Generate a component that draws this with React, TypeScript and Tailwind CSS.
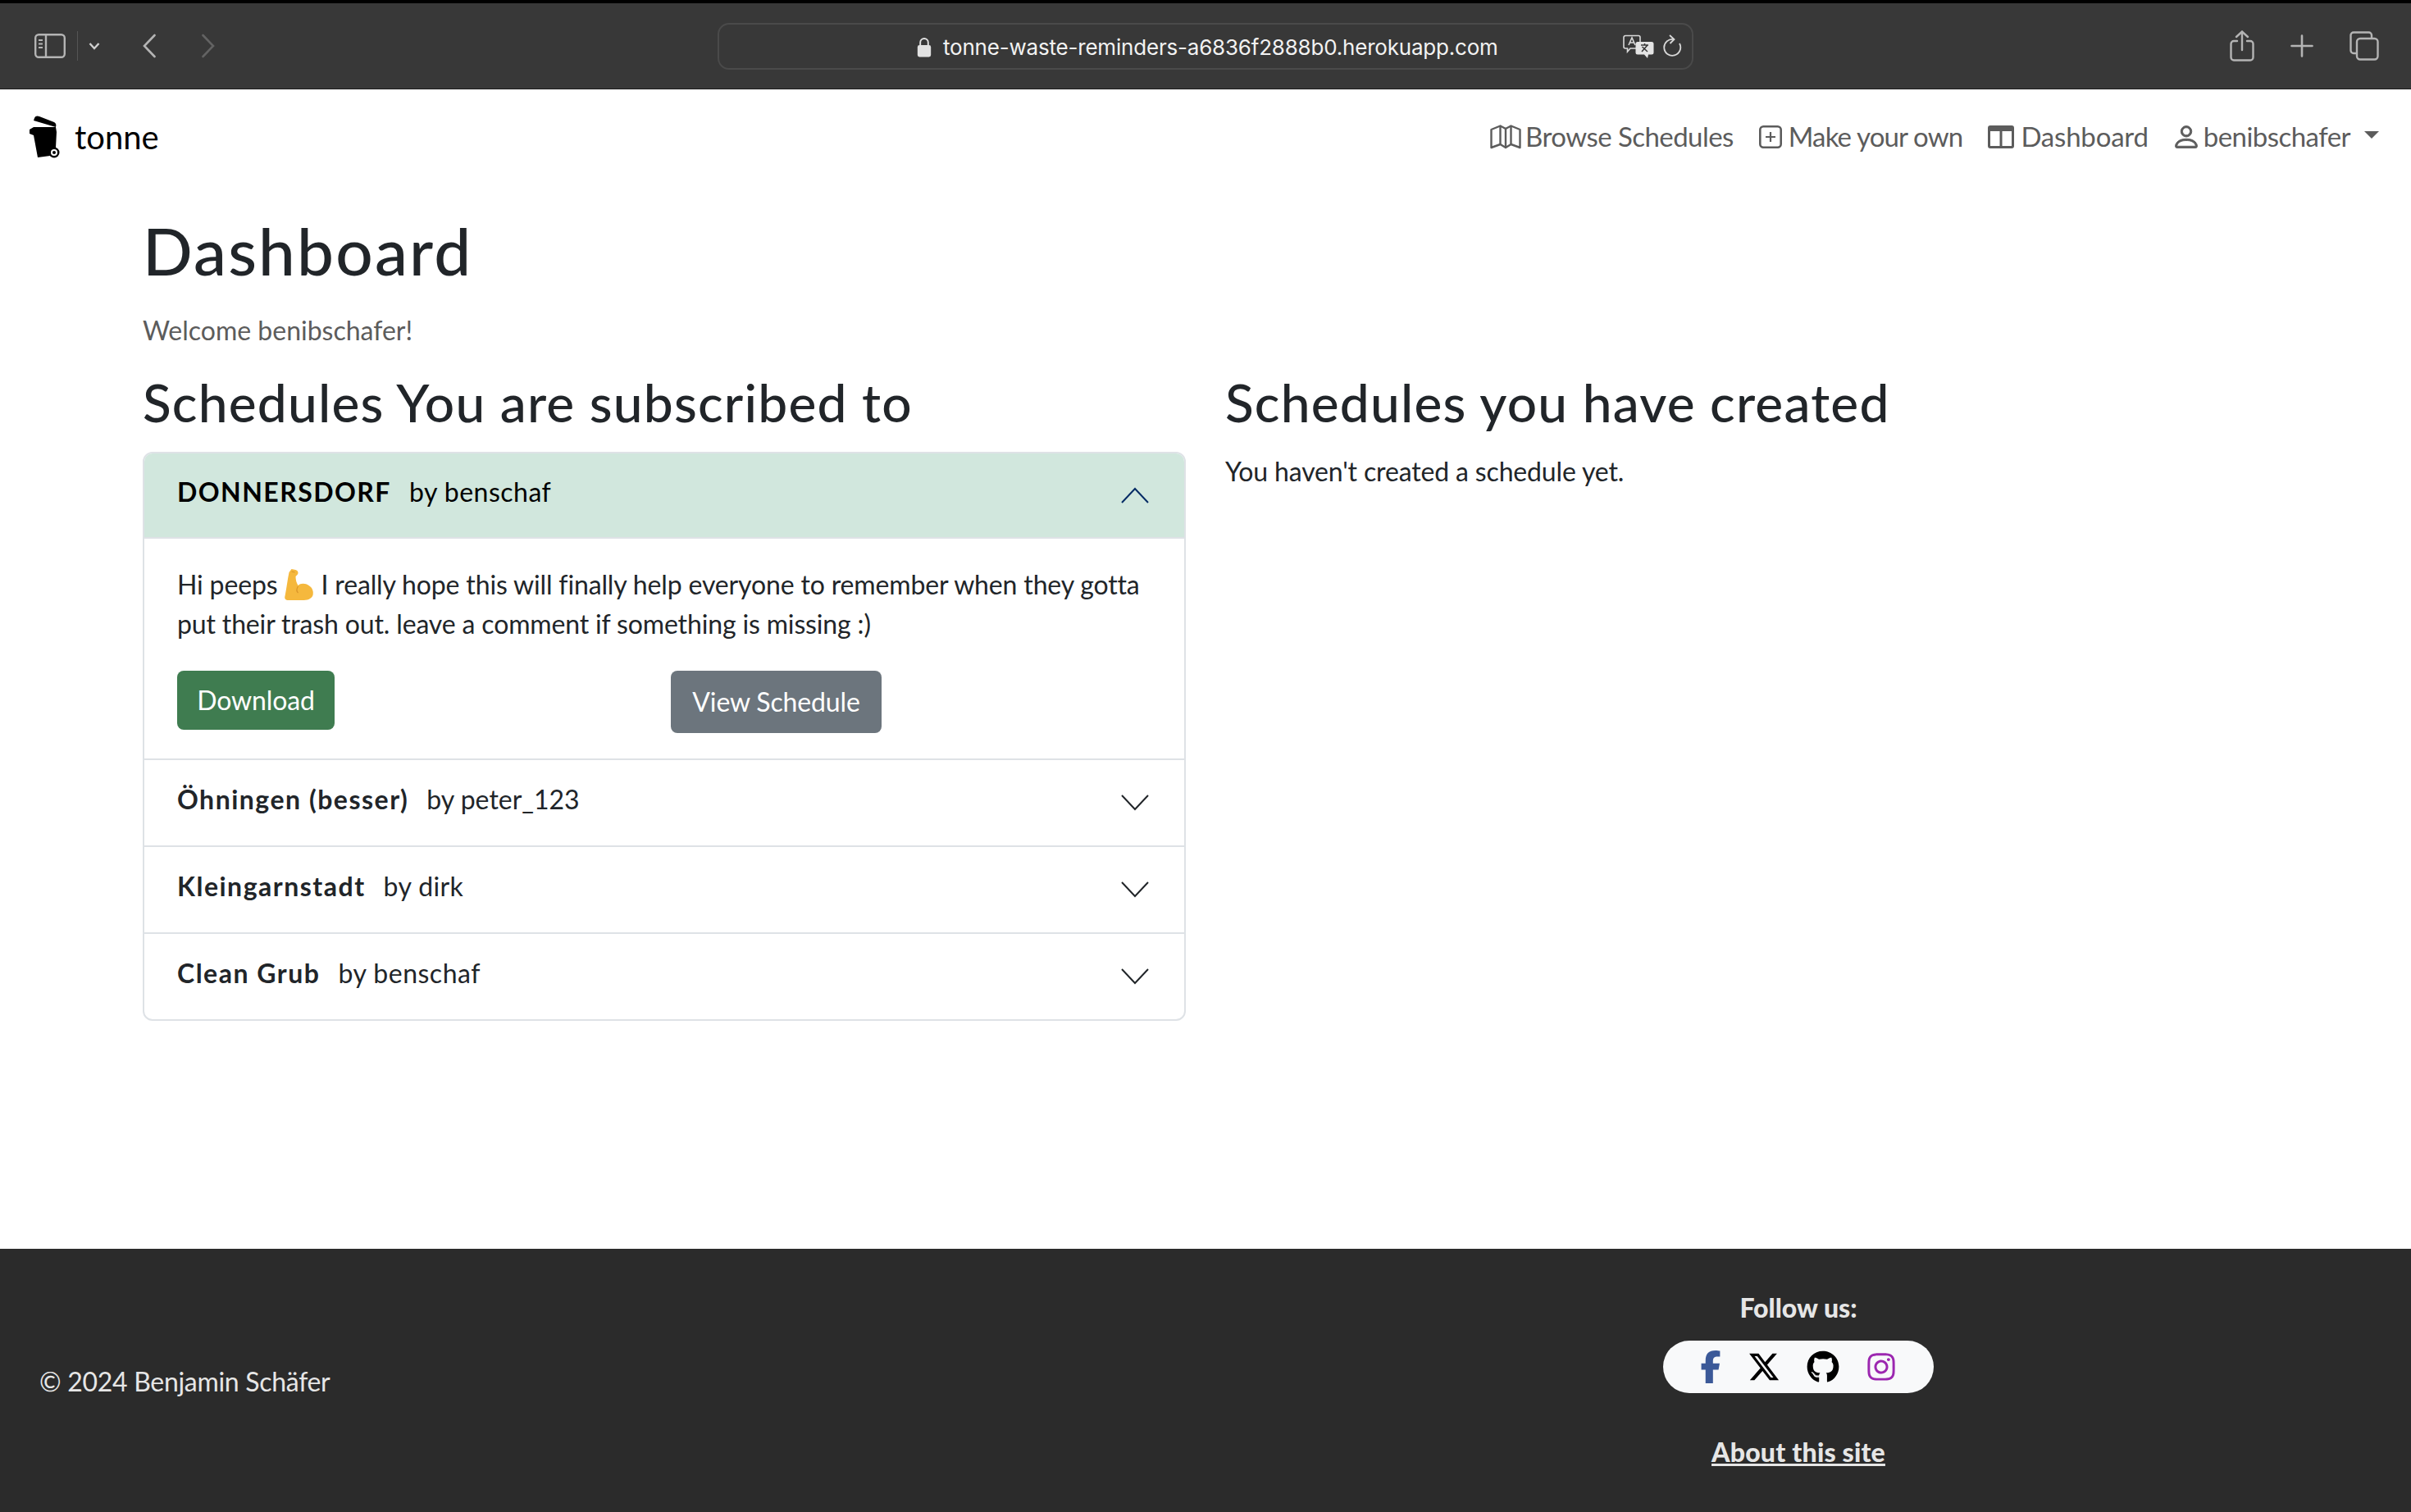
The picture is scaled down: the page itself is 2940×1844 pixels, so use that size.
import React from 'react';
import { BsPerson } from 'react-icons/bs';
import { FaFacebookF, FaXTwitter, FaGithub, FaInstagram } from 'react-icons/fa6';

const headingFont = "font-['Lato',sans-serif]";

function TrashLogo() {
  return (
    <svg viewBox="0 0 38 52" className="h-[52px] w-[38px]">
      <path d="M7 3 C8 0 11 0 13 1 L31 8 C33 9 34 11 33 14 L6 6 Z" fill="#000" />
      <path d="M1 17 L6 14 L33 14 L34 20 L33 39 C27 40 25 44 26 49 L11 51 L6 24 L1 22 Z" fill="#000" />
      <circle cx="31" cy="45" r="6.5" fill="#000" />
      <circle cx="31" cy="45" r="4" fill="#fff" />
      <circle cx="31" cy="45" r="2" fill="#000" />
    </svg>
  );
}

function MapIcon() {
  return (
    <svg viewBox="0 0 38 30" className="h-[30px] w-[38px]" fill="none" stroke="#5c5c5c" strokeWidth="2.4" strokeLinejoin="round">
      <path d="M1.5 6 L12.5 1.5 L19 5 L25.5 1.5 L36.5 6 V28 L25.5 24 L19 28 L12.5 24 L1.5 28 Z" />
      <path d="M12.5 1.5 V24 M19 5 V28 M25.5 1.5 V24" />
    </svg>
  );
}

function PlusSquareIcon() {
  return (
    <svg viewBox="0 0 28 28" className="h-[28px] w-[28px]" fill="none" stroke="#5c5c5c" strokeWidth="2.6">
      <rect x="1.3" y="1.3" width="25.4" height="25.4" rx="4" />
      <path d="M14 8 V20 M8 14 H20" strokeWidth="2.2" />
    </svg>
  );
}

function DashIcon() {
  return (
    <svg viewBox="0 0 32 28" className="h-[28px] w-[32px]" fill="#5c5c5c">
      <path d="M3 0 H29 A3 3 0 0 1 32 3 V25 A3 3 0 0 1 29 28 H3 A3 3 0 0 1 0 25 V3 A3 3 0 0 1 3 0 Z M3 7 V25 H14.5 V7 Z M17.5 7 V25 H29 V7 Z" fillRule="evenodd" />
    </svg>
  );
}

function Biceps() {
  return (
    <svg viewBox="0 0 36 40" className="inline-block h-[40px] w-[37px] align-[-8px]">
      <path d="M9 1 L14 2 C17 3 18 6 16 8 L14 10 C14 14 15 18 17 21 C20 18 26 18 30 21 C35 24 36 29 35 33 C33 38 28 39 22 39 L5 39 C2 39 0 37 1 34 C3 24 4 14 6 5 Z" fill="#f5b83d" />
      <path d="M9 4 L13 5 M17 22 C15 25 15 28 17 30" stroke="#d9952a" strokeWidth="1.2" fill="none" />
    </svg>
  );
}

function Chevron({ up = false, color = '#212529' }: { up?: boolean; color?: string }) {
  return (
    <svg viewBox="0 0 34 20" className="h-[20px] w-[34px]" fill="none" stroke={color} strokeWidth="2">
      <path d={up ? 'M1 19 L17 2 L33 19' : 'M1 1 L17 18 L33 1'} />
    </svg>
  );
}

function BrowserBar() {
  return (
    <div className="flex h-[109px] items-center border-t-[4px] border-b border-t-black border-b-[#1c1c1c] bg-[#383838] font-['Inter',sans-serif]">
      <div className="flex w-[875px] items-center pl-[42px]">
        <svg viewBox="0 0 38 30" className="h-[30px] w-[38px]" fill="none" stroke="#b4b4b4" strokeWidth="2.4">
          <rect x="1.2" y="1.2" width="35.6" height="27.6" rx="4" />
          <path d="M14 1 V29" />
          <path d="M5 8 H10 M5 12.5 H10 M5 17 H10" strokeWidth="1.8" />
        </svg>
        <div className="ml-[14px] h-[36px] w-px bg-[#555]" />
        <svg viewBox="0 0 14 10" className="ml-[13px] h-[10px] w-[14px]" fill="none" stroke="#d0d0d0" strokeWidth="2.4">
          <path d="M1.5 2 L7 8 L12.5 2" />
        </svg>
        <svg viewBox="0 0 16 30" className="ml-[52px] h-[30px] w-[16px]" fill="none" stroke="#b4b4b4" strokeWidth="2.6" strokeLinecap="round">
          <path d="M14.5 2 L2 15 L14.5 28" />
        </svg>
        <svg viewBox="0 0 16 30" className="ml-[56px] h-[30px] w-[16px]" fill="none" stroke="#636363" strokeWidth="2.6" strokeLinecap="round">
          <path d="M1.5 2 L14 15 L1.5 28" />
        </svg>
      </div>
      <div className="relative flex h-[57px] w-[1190px] items-center rounded-[14px] border-2 border-[#4a4a4a] pl-[241px] pt-[2px]">
        <svg viewBox="0 0 18 26" className="mr-[14px] h-[25px] w-[18px]">
          <path d="M4 11 V7 A5 5 0 0 1 14 7 V11" fill="none" stroke="#e2e2e2" strokeWidth="2" />
          <rect x="0.5" y="10.5" width="17" height="15" rx="2.5" fill="#e2e2e2" />
        </svg>
        <span className="text-[26px] tracking-[-0.2px] text-[#f2f2f2]">tonne-waste-reminders-a6836f2888b0.herokuapp.com</span>
        <div className="absolute right-[12px] top-[12px] flex items-center gap-[10px]">
          <svg viewBox="0 0 38 30" className="h-[30px] w-[38px]">
            <path d="M3 1.5 H19 A2 2 0 0 1 21 3.5 V15 A2 2 0 0 1 19 17 H9 L5.5 21 V17 H3 A2 2 0 0 1 1 15 V3.5 A2 2 0 0 1 3 1.5 Z" fill="none" stroke="#d8d8d8" strokeWidth="1.6" />
            <path d="M7 13 L11 4 L15 13 M8.5 10 H13.5" fill="none" stroke="#d8d8d8" strokeWidth="1.6" />
            <path d="M18 9 H35 A2.5 2.5 0 0 1 37.5 11.5 V22 A2.5 2.5 0 0 1 35 24.5 H31 L30 29 L26 24.5 H18 A2.5 2.5 0 0 1 15.5 22 V11.5 A2.5 2.5 0 0 1 18 9 Z" fill="#e4e4e4" />
            <path d="M22 13 H31 M26.5 11 V13 M30 13 L23 21 M23.5 15 L30 21" fill="none" stroke="#383838" strokeWidth="1.5" />
          </svg>
          <svg viewBox="0 0 24 30" className="h-[30px] w-[24px]" fill="none" stroke="#d8d8d8" strokeWidth="1.8">
            <path d="M14 6 A10 10 0 1 0 21 11" />
            <path d="M9 1 L14.5 6 L9.5 11" />
          </svg>
        </div>
      </div>
      <div className="flex flex-1 items-center justify-end gap-[44px] pr-[39px]">
        <svg viewBox="0 0 30 38" className="h-[38px] w-[30px]" fill="none" stroke="#b4b4b4" strokeWidth="2.4" strokeLinecap="round">
          <path d="M9 13 H5 A3.5 3.5 0 0 0 1.5 16.5 V33 A3.5 3.5 0 0 0 5 36.5 H25 A3.5 3.5 0 0 0 28.5 33 V16.5 A3.5 3.5 0 0 0 25 13 H21" />
          <path d="M15 24 V2 M8 8 L15 1.5 L22 8" />
        </svg>
        <svg viewBox="0 0 28 28" className="h-[28px] w-[28px]" fill="none" stroke="#b4b4b4" strokeWidth="2.6" strokeLinecap="round">
          <path d="M14 1.5 V26.5 M1.5 14 H26.5" />
        </svg>
        <svg viewBox="0 0 36 36" className="h-[36px] w-[36px]" fill="none" stroke="#b4b4b4" strokeWidth="2.4">
          <path d="M8 27 H5 A3.5 3.5 0 0 1 1.5 23.5 V5 A3.5 3.5 0 0 1 5 1.5 H23.5 A3.5 3.5 0 0 1 27 5 V8" />
          <rect x="9" y="9" width="25.5" height="25.5" rx="4" />
        </svg>
      </div>
    </div>
  );
}

function Navbar() {
  return (
    <nav className="flex h-[116px] items-center justify-between pl-[35px] pr-[39px] text-[33px] text-[#5c5c5c]">
      <div className="flex items-center gap-[17px]">
        <TrashLogo />
        <span className="ml-[1px] text-[40px] text-black">tonne</span>
      </div>
      <div className="flex items-center gap-[31px] tracking-[-0.55px]">
        <a className="flex items-center gap-[5px]"><MapIcon />Browse Schedules</a>
        <a className="flex items-center gap-[8px] tracking-[-0.85px]"><PlusSquareIcon />Make your own</a>
        <a className="-mr-[3px] flex items-center gap-[8px] tracking-[-0.2px]"><DashIcon />Dashboard</a>
        <a className="flex items-center gap-[3px]">
          <BsPerson className="h-[36px] w-[36px] stroke-[0.4]" />benibschafer
          <span className="ml-[14px] mt-[-6px] h-0 w-0 border-x-[9px] border-t-[9px] border-x-transparent border-t-[#5c5c5c]" />
        </a>
      </div>
    </nav>
  );
}

const schedules = [
  { name: 'Öhningen (besser)', by: 'peter_123', byTracking: 'tracking-[0px]' },
  { name: 'Kleingarnstadt', by: 'dirk', byTracking: 'tracking-[0.4px]' },
  { name: 'Clean Grub', by: 'benschaf', byTracking: 'tracking-[0.5px]' },
];

function Accordion() {
  return (
    <div className="overflow-hidden rounded-[12px] border-2 border-[#dee2e6]">
      <div className="flex h-[102px] items-center justify-between bg-[#d1e7dd] pl-[40px] pr-[43px]">
        <div className={`${headingFont} flex items-baseline gap-[22px] pb-[9px] text-[32px] text-black`}>
          <span className="font-bold tracking-[1.45px]">DONNERSDORF</span>
          <span className="tracking-[0.5px]">by benschaf</span>
        </div>
        <Chevron up color="#052c65" />
      </div>
      <div className="border-t-2 border-[#dee2e6] px-[40px] pt-[32px] pb-[31px] text-[32px] leading-[48px] tracking-[-0.15px] text-[#212529]">
        <p>Hi peeps <Biceps /> I really hope this will finally help everyone to remember when they gotta put their trash out. leave a comment if something is missing :)</p>
        <div className="mt-[33px] flex items-start">
          <button className="flex h-[72px] w-[192px] items-center justify-center rounded-[8px] bg-[#3f7c50] text-white">Download</button>
          <button className="ml-[410px] flex h-[76px] w-[257px] items-center justify-center rounded-[8px] bg-[#6c757d] text-white">View Schedule</button>
        </div>
      </div>
      {schedules.map((item) => (
        <div key={item.name} className="flex h-[106px] items-center justify-between border-t-2 border-[#dee2e6] pl-[40px] pr-[43px]">
          <div className={`${headingFont} flex items-baseline gap-[22px] pb-[9px] text-[32px] text-[#212529]`}>
            <span className="font-bold tracking-[1.5px]">{item.name}</span>
            <span className={item.byTracking}>by {item.by}</span>
          </div>
          <Chevron />
        </div>
      ))}
    </div>
  );
}

function Footer() {
  return (
    <footer className="mt-auto grid h-[321px] grid-cols-2 bg-[#2b2b2b] px-[24px] text-[32px] text-[#e6e6e6]">
      <div className="flex items-center pl-[24px] pt-[2px] tracking-[-0.3px]">© 2024 Benjamin Schäfer</div>
      <div className="flex flex-col items-center pt-[52px] font-black">
        <p className="leading-[40px]">Follow us:</p>
        <div className="mt-[20px] flex h-[64px] w-[330px] items-center justify-center gap-[32px] rounded-full bg-[#f8f9fa]">
          <FaFacebookF className="h-[40px] w-[26px] text-[#3b5998]" />
          <FaXTwitter className="h-[40px] w-[40px] text-black" />
          <FaGithub className="h-[40px] w-[40px] text-black" />
          <FaInstagram className="h-[38px] w-[38px] text-[#9c27b0]" />
        </div>
        <a className="mt-[52px] leading-[40px] tracking-[0.2px] underline">About this site</a>
      </div>
    </footer>
  );
}

export default function App() {
  return (
    <div className="flex min-h-[1844px] flex-col bg-white font-['Lato',sans-serif]">
      <BrowserBar />
      <Navbar />
      <main className="px-[174px] pt-[32px]">
        <h1 className={`${headingFont} text-[80px] leading-[96px] font-medium tracking-[2.2px] text-[#212529]`}>Dashboard</h1>
        <p className="mt-[26px] text-[32px] leading-[48px] tracking-[0px] text-[#5c5c5c]">Welcome benibschafer!</p>
        <div className="mt-[25px] grid grid-cols-[1272px_1fr] gap-x-[48px]">
          <section>
            <h2 className={`${headingFont} mb-[22px] text-[64px] leading-[77px] font-medium tracking-[1.2px] text-[#212529]`}>Schedules You are subscribed to</h2>
            <Accordion />
          </section>
          <section>
            <h2 className={`${headingFont} mb-[22px] text-[64px] leading-[77px] font-medium tracking-[1.2px] text-[#212529]`}>Schedules you have created</h2>
            <p className="text-[32px] leading-[48px] tracking-[-0.15px] text-[#212529]">You haven't created a schedule yet.</p>
          </section>
        </div>
      </main>
      <Footer />
    </div>
  );
}
